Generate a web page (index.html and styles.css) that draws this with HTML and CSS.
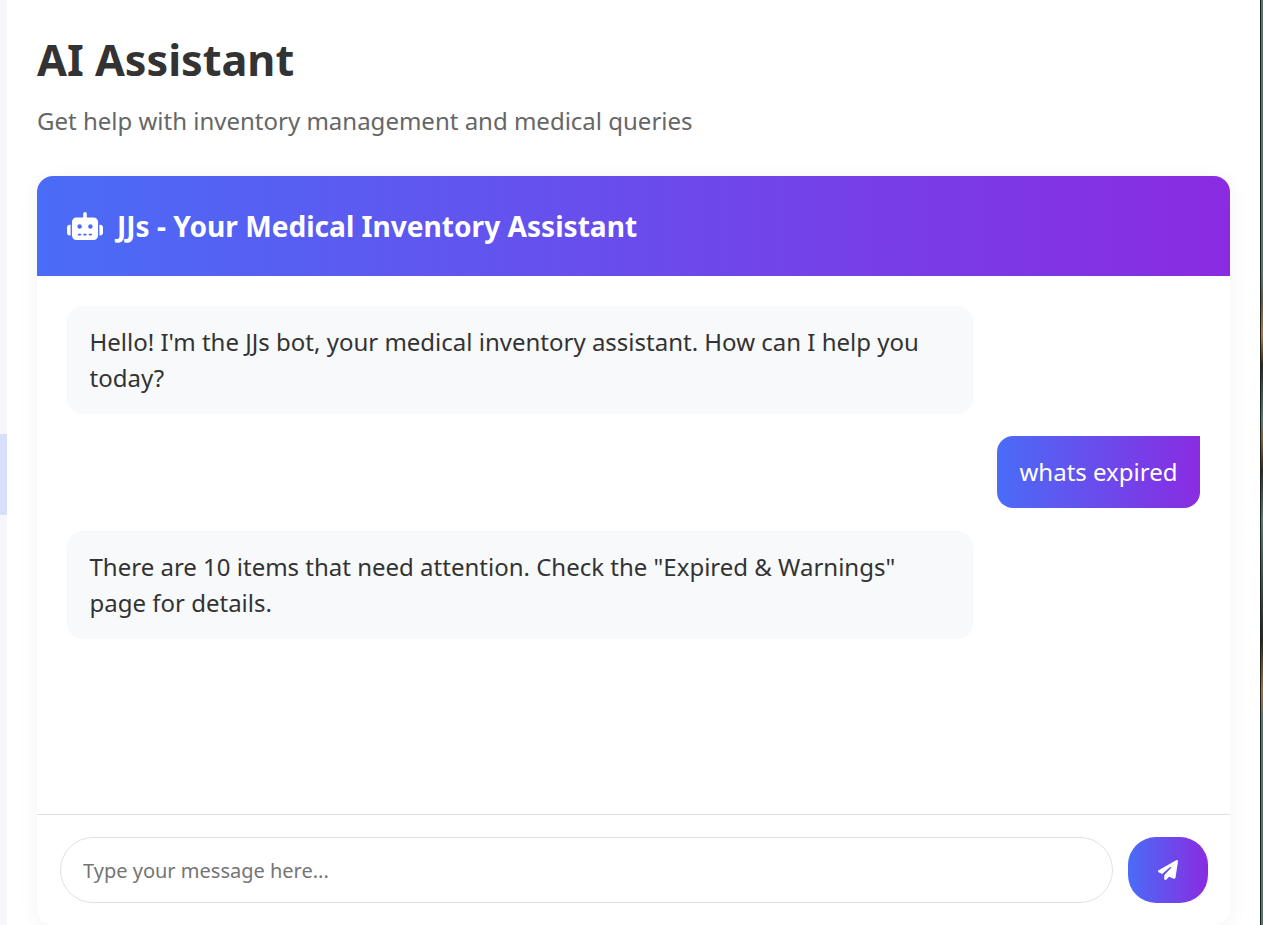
FILE: index.html
```html
<!DOCTYPE html>
<html lang="en">
<head>
    <meta charset="UTF-8">
    <meta name="viewport" content="width=device-width, initial-scale=1.0">
    <title>AI Assistant</title>
    <link rel="stylesheet" href="styles.css">
</head>
<body>
    <div class="sidebar">
        <div class="sidebar-active"></div>
    </div>
    <main class="main">
        <h1 class="page-title">AI Assistant</h1>
        <p class="page-subtitle">Get help with inventory management and medical queries</p>

        <section class="chat-card">
            <header class="chat-header">
                <svg class="robot-icon" viewBox="0 0 640 512" aria-hidden="true"><path d="M320 0c17.7 0 32 14.3 32 32V96H472c44.2 0 80 35.8 80 80V416c0 44.2-35.8 80-80 80H168c-44.2 0-80-35.8-80-80V176c0-44.2 35.8-80 80-80H288V32c0-17.7 14.3-32 32-32zM208 384c-8.8 0-16 7.2-16 16s7.2 16 16 16h32c8.8 0 16-7.2 16-16s-7.2-16-16-16H208zm96 0c-8.8 0-16 7.2-16 16s7.2 16 16 16h32c8.8 0 16-7.2 16-16s-7.2-16-16-16H304zm96 0c-8.8 0-16 7.2-16 16s7.2 16 16 16h32c8.8 0 16-7.2 16-16s-7.2-16-16-16H400zM264 256a40 40 0 1 0 -80 0 40 40 0 1 0 80 0zm152 40a40 40 0 1 0 0-80 40 40 0 1 0 0 80zM48 224H64V416H48c-26.5 0-48-21.5-48-48V272c0-26.5 21.5-48 48-48zm544 0c26.5 0 48 21.5 48 48v96c0 26.5-21.5 48-48 48H576V224h16z"/></svg>
                <h2 class="chat-title">JJs - Your Medical Inventory Assistant</h2>
            </header>

            <div class="chat-messages">
                <div class="message bot">Hello! I'm the JJs bot, your medical inventory assistant. How can I help you today?</div>
                <div class="message user">whats expired</div>
                <div class="message bot">There are 10 items that need attention. Check the "Expired &amp; Warnings" page for details.</div>
            </div>

            <form class="chat-input">
                <input type="text" class="message-input" placeholder="Type your message here...">
                <button type="button" class="send-button" aria-label="Send">
                    <svg class="send-icon" viewBox="0 0 512 512" aria-hidden="true"><path d="M498.1 5.6c10.1 7 15.4 19.1 13.5 31.2l-64 416c-1.5 9.7-7.4 18.2-16 23s-18.9 5.4-28 1.6L284 427.7l-68.5 74.1c-8.9 9.7-22.9 12.9-35.2 8.1S160 493.2 160 480V396.4c0-4 1.5-7.8 4.2-10.7L331.8 202.8c5.8-6.3 5.6-16-.4-22s-15.7-6.4-22-.7L106 360.8 17.7 316.6C7.1 311.3 .3 300.7 0 288.9s5.9-22.8 16.1-28.7l448-256c10.7-6.1 23.9-5.5 34 1.4z"/></svg>
                </button>
            </form>
        </section>
    </main>
    <div class="desktop-edge"></div>
</body>
</html>
```

FILE: styles.css
```css
html, body {
    height: 100%;
}
body {
    margin: 0;
    display: flex;
    overflow: hidden;
    font-family: "Noto Sans", sans-serif;
    background-color: #fff;
    color: #333;
}
.sidebar {
    width: 7px;
    flex-shrink: 0;
    padding-top: 434px;
    box-sizing: border-box;
    background-color: #f5f7fa;
}
.sidebar-active {
    height: 81px;
    background-color: #d8dffa;
}
.main {
    flex: 1;
    min-width: 0;
    height: 925px;
    box-sizing: border-box;
    padding: 30px 30px 0;
    background-color: #fff;
}
.page-title {
    margin: 0;
    font-size: 43.2px;
    line-height: 60px;
    font-weight: 700;
    color: #333;
}
.page-subtitle {
    margin: 16px 0 0;
    font-size: 24px;
    line-height: 30px;
    color: #666;
}
.chat-card {
    margin-top: 40px;
    width: 1193px;
    height: 749px;
    display: flex;
    flex-direction: column;
    background-color: #fff;
    border-radius: 16px;
    box-shadow: 0 4px 22px rgba(0, 0, 0, 0.05);
    overflow: hidden;
}
.chat-header {
    height: 100px;
    flex-shrink: 0;
    display: flex;
    align-items: center;
    gap: 14px;
    padding: 0 30px;
    color: #fff;
    background: linear-gradient(90deg, #4a6cf7, #8a2be2);
}
.robot-icon {
    width: 36px;
    height: 29px;
    fill: #fff;
}
.chat-title {
    margin: 0;
    font-size: 28.1px;
    font-weight: 700;
    color: #fff;
}
.chat-messages {
    flex: 1;
    display: flex;
    flex-direction: column;
    align-items: flex-start;
    gap: 22.4px;
    padding: 30px;
}
.message {
    max-width: 80%;
    box-sizing: border-box;
    padding: 18px 22.5px;
    font-size: 24px;
    line-height: 36px;
    border-radius: 16px;
}
.message.bot {
    width: 80%;
    background-color: #f8f9fa;
    color: #333;
}
.message.user {
    align-self: flex-end;
    border-top-right-radius: 0;
    color: #fff;
    background: linear-gradient(90deg, #4a6cf7, #8a2be2);
}
.chat-input {
    flex-shrink: 0;
    display: flex;
    gap: 15px;
    padding: 22px 22.5px 22.5px;
    border-top: 1px solid #e0e0e0;
}
.message-input {
    flex: 1;
    min-width: 0;
    height: 66px;
    box-sizing: border-box;
    padding: 2px 22.5px 0;
    border: 1px solid #e0e0e0;
    border-radius: 33px;
    outline: none;
    font-family: inherit;
    font-size: 20px;
    color: #333;
}
.message-input::placeholder {
    color: #757575;
}
.send-button {
    width: 80px;
    height: 66px;
    flex-shrink: 0;
    display: flex;
    align-items: center;
    justify-content: center;
    padding: 0;
    border: none;
    border-radius: 28px;
    cursor: pointer;
    background: linear-gradient(90deg, #4a6cf7, #8a2be2);
}
.send-icon {
    width: 20px;
    height: 20px;
    fill: #fff;
}
.desktop-edge {
    width: 3px;
    flex-shrink: 0;
    border-left: 1px solid #1c2422;
    box-sizing: border-box;
    background: linear-gradient(180deg, #4f7a72 0, #4f7a72 270px, #5b5a48 300px, #c8701e 335px, #2a2a22 365px, #4f7a72 420px, #8a5a30 440px, #2c2c26 470px, #4f7a72 520px, #28261f 640px, #b06a28 690px, #4f7a72 720px, #4f7a72 925px);
}
```
